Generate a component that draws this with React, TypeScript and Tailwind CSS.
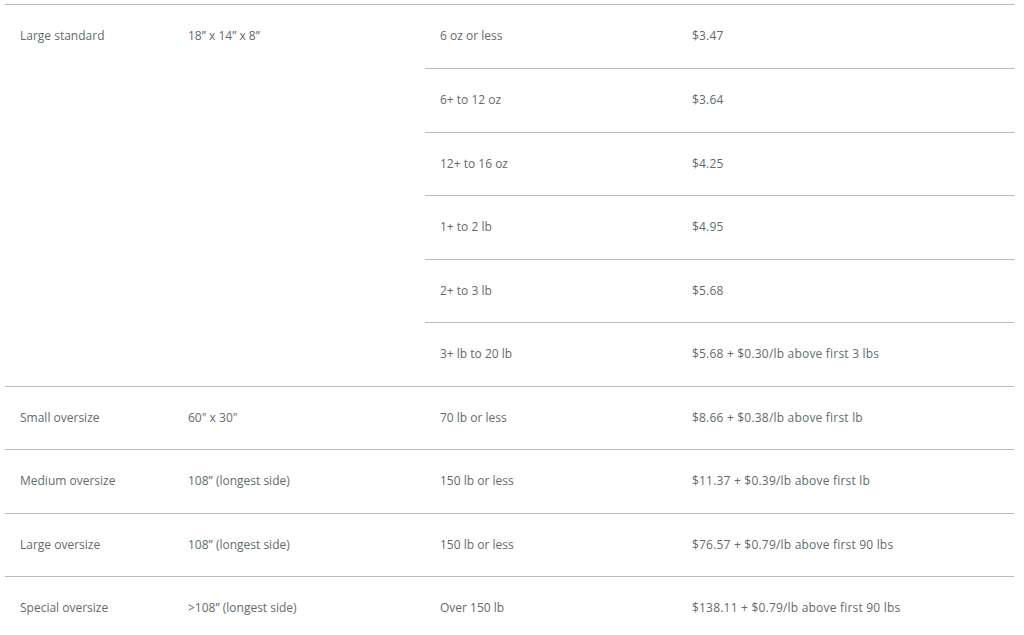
import React from "react";

const sub = [
  ["6 oz or less", "$3.47"],
  ["6+ to 12 oz", "$3.64"],
  ["12+ to 16 oz", "$4.25"],
  ["1+ to 2 lb", "$4.95"],
  ["2+ to 3 lb", "$5.68"],
  ["3+ lb to 20 lb", "$5.68 + $0.30/lb above first 3 lbs"],
];

const rows = [
  ["Small oversize", "60\" x 30\"", "70 lb or less", "$8.66 + $0.38/lb above first lb"],
  ["Medium oversize", "108\u201d (longest side)", "150 lb or less", "$11.37 + $0.39/lb above first lb"],
  ["Large oversize", "108\u201d (longest side)", "150 lb or less", "$76.57 + $0.79/lb above first 90 lbs"],
  ["Special oversize", ">108\u201d (longest side)", "Over 150 lb", "$138.11 + $0.79/lb above first 90 lbs"],
];

export default function App() {
  return (
    <div
      className="w-[1024px] h-[635px] overflow-hidden bg-white pt-[3.5px] pl-[5px] text-[12px] text-[#5f6b6c]"
      style={{ fontFamily: '"Open Sans", "Noto Sans", sans-serif' }}
    >
      <div className="w-[1009px]">
        <div className="flex border-t border-[#b3bfbf]">
          <div className="w-[168px] shrink-0 pl-[15px] h-[63.5px] flex items-center">Large standard</div>
          <div className="w-[252px] shrink-0 pl-[15px] h-[63.5px] flex items-center">18&#8221; x 14&#8221; x 8&#8221;</div>
          <div className="flex-1">
            {sub.map((s, i) => (
              <div
                key={i}
                className={`flex h-[63.5px] items-center ${i > 0 ? "border-t border-[#b3bfbf]" : ""}`}
              >
                <div className="w-[252px] shrink-0 pl-[15px]">{s[0]}</div>
                <div className="flex-1 pl-[15px] tracking-[0.2px]">{s[1]}</div>
              </div>
            ))}
          </div>
        </div>
        {rows.map((r, i) => (
          <div key={i} className="flex h-[63.5px] items-center border-t border-[#b3bfbf]">
            <div className="w-[168px] shrink-0 pl-[15px]">{r[0]}</div>
            <div className="w-[252px] shrink-0 pl-[15px]">{r[1]}</div>
            <div className="w-[252px] shrink-0 pl-[15px]">{r[2]}</div>
            <div className="flex-1 pl-[15px] tracking-[0.2px]">{r[3]}</div>
          </div>
        ))}
      </div>
    </div>
  );
}
